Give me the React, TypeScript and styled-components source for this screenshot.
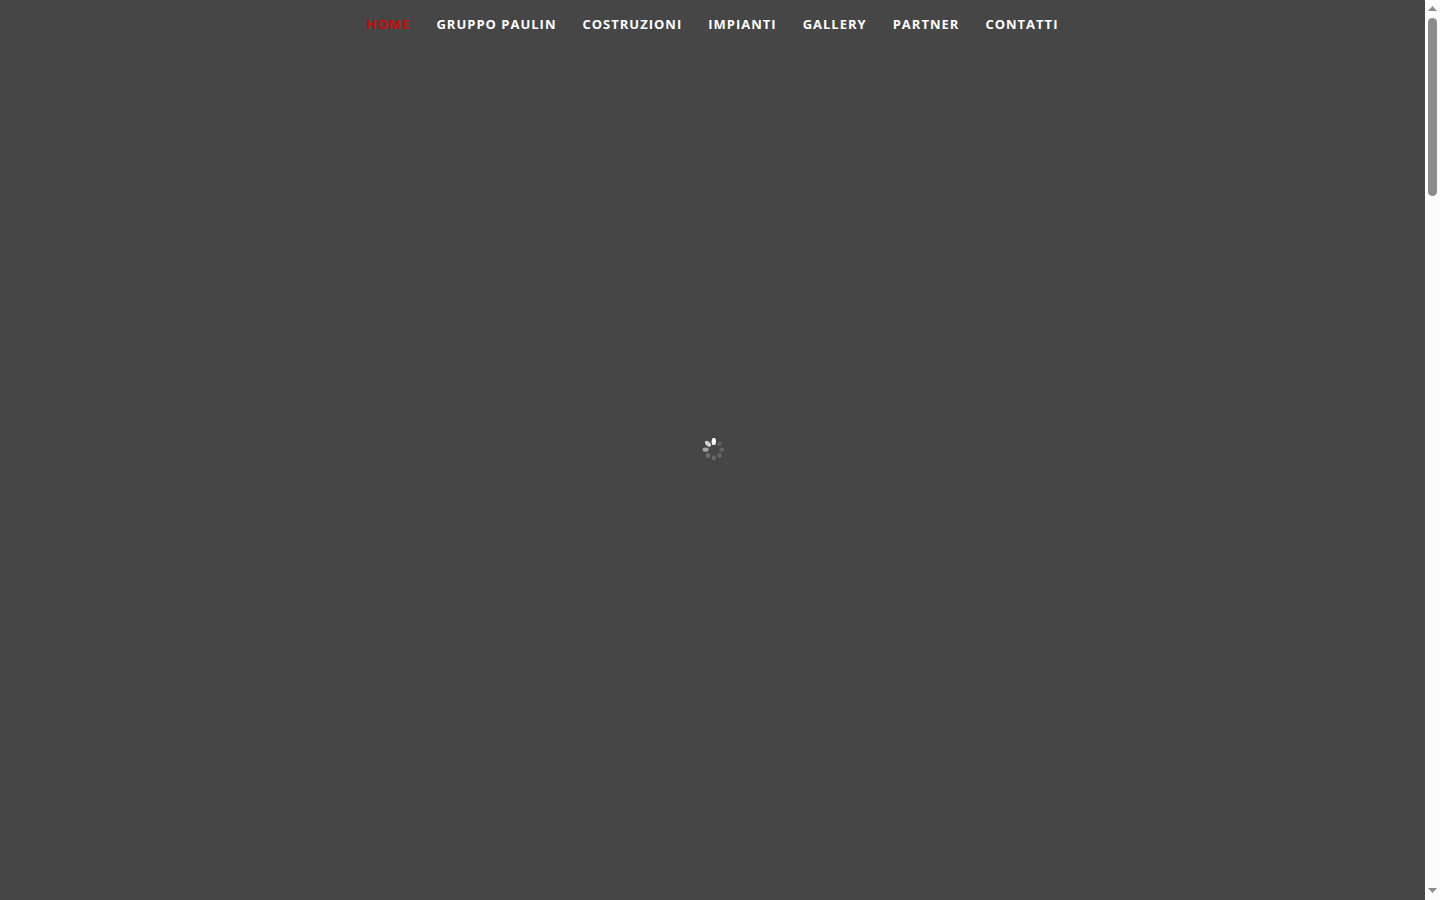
import React from "react";
import styled, { createGlobalStyle } from "styled-components";

const GlobalStyle = createGlobalStyle`
  html, body { margin: 0; padding: 0; }
  body { background: #464646; overflow: hidden; }
`;

const Page = styled.div`
  display: grid;
  grid-template-columns: 1fr 15px;
  min-height: 100vh;
  font-family: "Open Sans", sans-serif;
`;

const Content = styled.div`
  display: grid;
  grid-template-rows: 100vh;
  background: #464646;
`;

const Header = styled.header`
  grid-area: 1 / 1;
  align-self: start;
`;

const Menu = styled.ul`
  display: flex;
  justify-content: center;
  gap: 26px;
  margin: 0;
  padding: 14px 0;
  list-style: none;
`;

const MenuLink = styled.a<{ $active?: boolean }>`
  display: block;
  color: ${(p) => (p.$active ? "#cc0a0a" : "#ffffff")};
  font-size: 13px;
  font-weight: 700;
  line-height: 20px;
  letter-spacing: 1px;
  text-decoration: none;
  text-transform: uppercase;
  white-space: nowrap;
`;

const Loader = styled.main`
  grid-area: 1 / 1;
  place-self: center;
  display: flex;
`;

const ScrollTrack = styled.div`
  display: flex;
  flex-direction: column;
  align-items: center;
  height: 100vh;
  background: #fcfcfc;
`;

const Thumb = styled.div`
  width: 9px;
  height: 178px;
  margin: 1px 0 auto;
  border-radius: 5px;
  background: #8b8b8b;
`;

const Arrow = ({ down }: { down?: boolean }) => (
  <svg width="15" height="17" viewBox="0 0 15 17" aria-hidden="true">
    <path d={down ? "M3 5h9L7.5 10z" : "M3 11h9L7.5 6z"} fill="#8b8b8b" />
  </svg>
);

const items = ["Home", "Gruppo Paulin", "Costruzioni", "Impianti", "Gallery", "Partner", "Contatti"];

const petals = [
  { angle: 0, fill: "#ffffff", rx: 2.2, ry: 3.6 },
  { angle: 45, fill: "#5e5e5e", rx: 2.2, ry: 2.5 },
  { angle: 90, fill: "#626262", rx: 2.2, ry: 2.5 },
  { angle: 135, fill: "#666666", rx: 2.2, ry: 2.5 },
  { angle: 180, fill: "#686868", rx: 2.2, ry: 2.5 },
  { angle: 225, fill: "#6c6c6c", rx: 2.2, ry: 2.5 },
  { angle: 270, fill: "#a5a5a5", rx: 2.2, ry: 3 },
  { angle: 315, fill: "#d2d2d2", rx: 2.2, ry: 3.6 },
];

export default function App() {
  return (
    <Page>
      <GlobalStyle />
      <Content>
        <Header>
          <nav>
            <Menu>
              {items.map((item, i) => (
                <li key={item}>
                  <MenuLink href="#" $active={i === 0}>{item}</MenuLink>
                </li>
              ))}
            </Menu>
          </nav>
        </Header>
        <Loader>
          <svg width="24" height="24" viewBox="0 0 24 24" role="img" aria-label="Loading">
            {petals.map((p) => (
              <ellipse
                key={p.angle}
                cx="12.8"
                cy="3.4"
                rx={p.rx}
                ry={p.ry}
                fill={p.fill}
                transform={`rotate(${p.angle} 12.8 11.6)`}
              />
            ))}
          </svg>
        </Loader>
      </Content>
      <ScrollTrack aria-hidden="true">
        <Arrow />
        <Thumb />
        <Arrow down />
      </ScrollTrack>
    </Page>
  );
}
